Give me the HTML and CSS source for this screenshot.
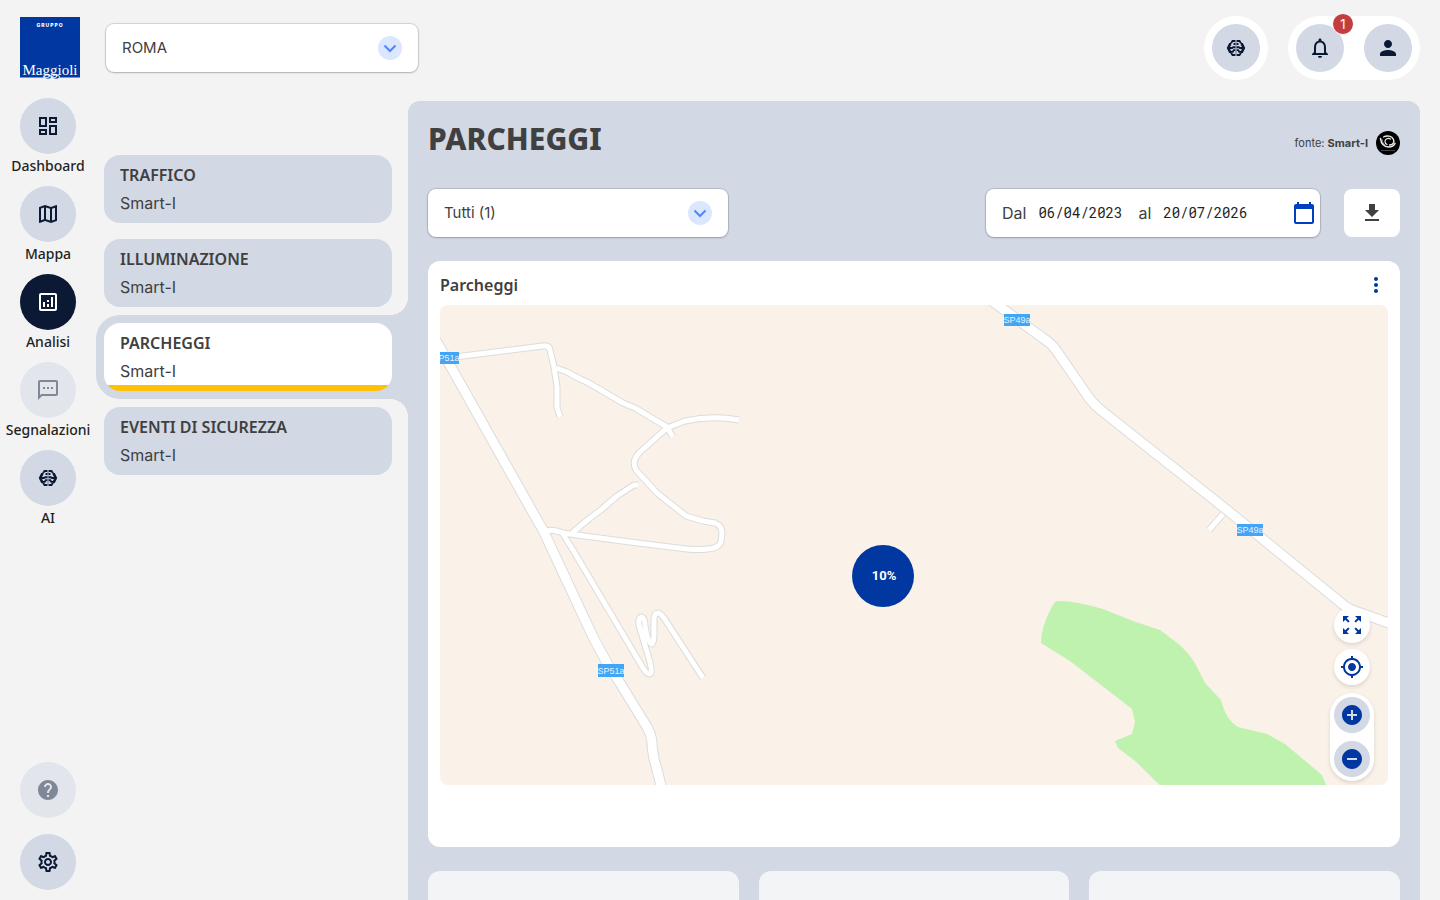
FILE: index.html
```html
<!DOCTYPE html>
<html lang="it">
<head>
<meta charset="utf-8">
<meta name="viewport" content="width=device-width, initial-scale=1">
<title>Parcheggi</title>
<link rel="stylesheet" href="styles.css">
</head>
<body>
<svg class="sprite" aria-hidden="true">
  <symbol id="i-brain" viewBox="0 0 24 24">
    <g fill="none" stroke="currentColor">
      <path stroke-width="1.800" d="M11.300 5H8.500L7 7.300M11.300 19H8.500L7 16.700M12.700 5h2.800L17 7.300M12.700 19h2.800l1.500-2.300"/>
      <path stroke-width="2.600" d="M7.200 8.200H6L4.200 12 6 15.800h1.200M16.800 8.200H18l1.800 3.800-1.800 3.800h-1.200"/>
      <path stroke-width="2" d="M4 12h4l1.200-.8h2.200M20 12h-4l-1.200-.8h-2.200M11.400 8H9.500M12.600 8h1.900"/>
      <path stroke-width="1.800" d="M7 15.800h1.800l1-1.600h1.500M17 15.800h-1.800l-1-1.600h-1.500"/>
      <path stroke-width="1" opacity=".5" d="M12 4v16"/>
    </g>
  </symbol>
  <symbol id="i-chevron" viewBox="0 0 24 24"><path d="M6.500 9.500 12 15l5.500-5.500" fill="none" stroke="currentColor" stroke-width="2"/></symbol>
</svg>

<aside class="rail">
  <a class="logo" href="#" aria-label="Gruppo Maggioli">
    <svg width="60" height="63" viewBox="0 0 60 63">
      <path fill="#0037a0" d="M0 0h60v60.500H0z"/>
      <text class="logo-top" x="30" y="10" text-anchor="middle">GRUPPO</text>
      <g fill="#0037a0" stroke="#fff" stroke-width="1"><ellipse cx="28" cy="60" rx="3.500" ry="2.200"/><ellipse cx="36" cy="60" rx="3.500" ry="2.200"/></g>
      <text class="logo-name" x="30" y="58" text-anchor="middle">Maggioli</text>
    </svg>
  </a>
  <nav class="rail-nav">
    <a class="rail-item" href="#"><span class="disc"><svg class="icon" viewBox="0 0 24 24"><path fill="currentColor" d="M19 5v2h-4V5h4M9 5v6H5V5h4m10 8v6h-4v-6h4M9 17v2H5v-2h4M21 3h-8v6h8V3zM11 3H3v10h8V3zm10 8h-8v10h8V11zm-10 4H3v6h8v-6z"/></svg></span>Dashboard</a>
    <a class="rail-item" href="#"><span class="disc"><svg class="icon" viewBox="0 0 24 24"><path fill="currentColor" d="M20.500 3l-.16.030L15 5.100 9 3 3.360 4.900c-.21.070-.36.250-.36.480V20.500c0 .28.220.5.5.5l.16-.030L9 18.900l6 2.100 5.640-1.900c.21-.070.36-.25.36-.48V3.500c0-.28-.22-.5-.5-.5zM10 5.470l4 1.400v11.660l-4-1.400V5.470zm-5 .99l3-1.010v11.700l-3 1.160V6.460zm14 11.080l-3 1.010V6.860l3-1.160v11.840z"/></svg></span>Mappa</a>
    <a class="rail-item" href="#" aria-current="page"><span class="disc disc-active"><svg class="icon" viewBox="0 0 24 24"><path fill="currentColor" d="M19 3H5c-1.100 0-2 .9-2 2v14c0 1.100.9 2 2 2h14c1.100 0 2-.9 2-2V5c0-1.100-.9-2-2-2zm0 16H5V5h14v14zM7 12h2v5H7zM15 7h2v10h-2zM11 14h2v3h-2zM11 10h2v2h-2z"/></svg></span>Analisi</a>
    <a class="rail-item" href="#"><span class="disc disc-off"><svg class="icon" viewBox="0 0 24 24"><path fill="currentColor" d="M20 2H4c-1.100 0-2 .9-2 2v18l4-4h14c1.100 0 2-.9 2-2V4c0-1.100-.9-2-2-2zm0 14H5.200L4 17.200V4h16v12zM7 9h2v2H7zM11 9h2v2h-2zM15 9h2v2h-2z"/></svg></span>Segnalazioni</a>
    <a class="rail-item" href="#"><span class="disc"><svg class="icon"><use href="#i-brain"/></svg></span>AI</a>
  </nav>
  <div class="rail-foot">
    <button class="disc disc-off" type="button" aria-label="Aiuto" disabled><svg class="icon" viewBox="0 0 24 24"><path fill="currentColor" d="M12 2C6.480 2 2 6.480 2 12s4.480 10 10 10 10-4.480 10-10S17.520 2 12 2zm1 17h-2v-2h2v2zm2.070-7.750l-.9.920C13.450 12.900 13 13.500 13 15h-2v-.5c0-1.100.45-2.100 1.170-2.830l1.240-1.260c.37-.36.590-.86.590-1.410 0-1.100-.9-2-2-2s-2 .9-2 2H8c0-2.210 1.790-4 4-4s4 1.790 4 4c0 .88-.36 1.680-.93 2.250z"/></svg></button>
    <button class="disc" type="button" aria-label="Impostazioni"><svg class="icon" viewBox="0 0 24 24"><path fill="currentColor" d="M19.430 12.980c.04-.32.070-.64.070-.98 0-.34-.03-.66-.07-.98l2.110-1.650c.19-.15.240-.42.120-.64l-2-3.460c-.09-.16-.26-.25-.44-.25-.06 0-.12.010-.17.030l-2.490 1c-.52-.4-1.080-.73-1.690-.98l-.38-2.650C14.460 2.180 14.250 2 14 2h-4c-.25 0-.46.180-.49.420l-.38 2.650c-.61.250-1.170.59-1.690.98l-2.490-1c-.06-.02-.12-.03-.18-.03-.17 0-.34.090-.43.250l-2 3.460c-.13.220-.07.490.12.640l2.110 1.650c-.04.320-.07.650-.07.980 0 .33.030.66.070.98l-2.110 1.650c-.19.150-.24.420-.12.640l2 3.460c.09.160.26.250.44.250.06 0 .12-.01.170-.03l2.490-1c.52.4 1.080.73 1.690.98l.38 2.650c.03.240.24.420.49.420h4c.25 0 .46-.18.490-.42l.38-2.650c.61-.25 1.170-.59 1.690-.98l2.490 1c.06.020.12.030.18.030.17 0 .34-.09.430-.25l2-3.460c.12-.22.070-.49-.12-.64l-2.110-1.650zm-1.980-1.710c.04.310.050.52.050.73 0 .21-.02.430-.05.730l-.14 1.130.89.700 1.080.84-.7 1.210-1.270-.51-1.040-.42-.9.680c-.43.320-.84.560-1.250.73l-1.060.43-.16 1.130-.2 1.350h-1.400l-.19-1.350-.16-1.130-1.060-.43c-.43-.18-.83-.41-1.230-.71l-.91-.7-1.060.43-1.270.51-.7-1.210 1.080-.84.890-.7-.14-1.130c-.03-.31-.05-.54-.05-.74s.020-.43.050-.73l.14-1.130-.89-.7-1.080-.84.7-1.210 1.270.51 1.040.42.900-.68c.43-.32.840-.56 1.250-.73l1.060-.43.160-1.130.2-1.350h1.390l.19 1.350.16 1.130 1.060.43c.43.180.83.410 1.230.71l.91.700 1.060-.43 1.270-.51.700 1.210-1.070.85-.89.700.14 1.130zM12 8c-2.210 0-4 1.790-4 4s1.790 4 4 4 4-1.790 4-4-1.790-4-4-4zm0 6c-1.100 0-2-.9-2-2s.9-2 2-2 2 .9 2 2-.9 2-2 2z"/></svg></button>
  </div>
</aside>

<div class="shell">
  <header class="topbar">
    <div class="picker picker-city">
      <select aria-label="Comune"><option>ROMA</option></select>
      <span class="picker-arrow"><svg class="icon"><use href="#i-chevron"/></svg></span>
    </div>
    <div class="top-actions">
      <div class="pill"><button class="disc disc-small" type="button" aria-label="AI"><svg class="icon"><use href="#i-brain"/></svg></button></div>
      <div class="pill">
        <button class="disc disc-small" type="button" aria-label="Notifiche"><svg class="icon" viewBox="0 0 24 24"><path fill="currentColor" d="M12 22c1.100 0 2-.9 2-2h-4c0 1.100.9 2 2 2zm6-6v-5c0-3.070-1.630-5.640-4.500-6.320V4c0-.83-.67-1.500-1.500-1.500s-1.500.67-1.500 1.500v.68C7.640 5.360 6 7.920 6 11v5l-2 2v1h16v-1l-2-2zm-2 1H8v-6c0-2.480 1.510-4.500 4-4.500s4 2.020 4 4.500v6z"/></svg><span class="badge">1</span></button>
        <button class="disc disc-small" type="button" aria-label="Profilo"><svg class="icon" viewBox="0 0 24 24"><path fill="currentColor" d="M12 12c2.210 0 4-1.790 4-4s-1.790-4-4-4-4 1.790-4 4 1.790 4 4 4zm0 2c-2.670 0-8 1.340-8 4v2h16v-2c0-2.660-5.330-4-8-4z"/></svg></button>
      </div>
    </div>
  </header>

  <div class="body">
    <nav class="topics">
      <div class="topic"><a class="topic-link" href="#"><strong>TRAFFICO</strong><span>Smart-I</span></a></div>
      <div class="topic"><a class="topic-link" href="#"><strong>ILLUMINAZIONE</strong><span>Smart-I</span></a></div>
      <div class="topic topic-active"><a class="topic-link" href="#" aria-current="page"><strong>PARCHEGGI</strong><span>Smart-I</span></a></div>
      <div class="topic"><a class="topic-link" href="#"><strong>EVENTI DI SICUREZZA</strong><span>Smart-I</span></a></div>
    </nav>

    <main class="panel">
      <div class="panel-head">
        <h1>PARCHEGGI</h1>
        <div class="source"><span>fonte: <b>Smart-I</b></span>
          <svg width="24" height="24" viewBox="0 0 24 24"><circle cx="12" cy="12" r="12" fill="#000"/><g fill="none" stroke="#eee" stroke-linecap="round"><path stroke-width="1.600" d="M4.500 7.500c.8 5.500 3.500 8.500 8 8.500 3 0 5.500-1.500 6.500-3.500"/><path stroke-width="1.400" d="M7.500 6c3.500-2 8.500-1 10 2.500 1.200 3-.8 5.500-4 5.500"/><path stroke-width="1.200" d="M14.500 8c-2.500-1.300-5.500 0-5.500 2.500 0 1.500.8 2.500 2 3"/><path stroke="#999" stroke-width="1" d="M6 8.500c.5 3 1.500 4.500 3 5.500"/></g><path stroke="#444" d="M5 19.500h14"/></svg>
        </div>
      </div>

      <div class="filters">
        <div class="picker picker-area">
          <select aria-label="Parcheggio"><option>Tutti (1)</option></select>
          <span class="picker-arrow"><svg class="icon"><use href="#i-chevron"/></svg></span>
        </div>
        <div class="range">
          <label for="from">Dal</label><input id="from" type="text" value="06/04/2023">
          <label for="to">al</label><input id="to" type="text" value="20/07/2026">
          <button class="range-open" type="button" aria-label="Apri calendario"><svg class="icon" viewBox="0 0 24 24"><path fill="currentColor" d="M20 3h-1V1h-2v2H7V1H5v2H4c-1.100 0-2 .9-2 2v16c0 1.100.9 2 2 2h16c1.100 0 2-.9 2-2V5c0-1.100-.9-2-2-2zm0 18H4V8h16v13z"/></svg></button>
        </div>
        <button class="download" type="button" aria-label="Scarica"><svg class="icon" viewBox="0 0 24 24"><path fill="currentColor" d="M19 9h-4V3H9v6H5l7 7 7-7zM5 18v2h14v-2H5z"/></svg></button>
      </div>

      <section class="card">
        <div class="card-head">
          <h2>Parcheggi</h2>
          <button class="more" type="button" aria-label="Altro"><svg class="icon" viewBox="0 0 24 24"><path fill="currentColor" d="M12 8c1.100 0 2-.9 2-2s-.9-2-2-2-2 .9-2 2 .9 2 2 2zm0 2c-1.100 0-2 .9-2 2s.9 2 2 2 2-.9 2-2-.9-2-2-2zm0 6c-1.100 0-2 .9-2 2s.9 2 2 2 2-.9 2-2-.9-2-2-2z"/></svg></button>
        </div>
        <div class="map">
          <svg class="map-art" viewBox="440 305 948 480" preserveAspectRatio="xMidYMid slice" role="img" aria-label="Mappa dei parcheggi">
            <defs>
              <g id="minor">
                <path d="M455 357 543 346Q549 345 550 350L554 367 557 387V407L560 417"/>
                <path d="M556 368 567 372 580 379 587 382 623 403 635 408 667 427 673 437"/>
                <path d="M739 420Q713 415 685 421L667 428 640 452Q631 461 636 470L657 493 686 516 703 521 715 523Q722 526 722 533L721 542Q719 548 708 549 698 550 687 549L630 542 577 535 563 533Q552 529 547 531"/>
                <path d="M638 485H634L617 496 602 509 590 518 572 533"/>
                <path d="M563 534 573 550 643 668Q648 676 651 673 653 671 647 652L639 625Q638 617 642 617 645 618 645 626 648 644 652 644 654 641 654 635V620Q654 613 658 613 660 613 664 618L703 678"/>
                <path d="M1223 514 1209 530"/>
              </g>
              <g id="major">
                <path d="M434 337 451 367 536 518 543 530 593 637 607 663 620 683 647 727Q652 736 652 744 653 757 656 766L663 793"/>
                <path d="M985 296 1043 338Q1051 343 1056 350L1087 395Q1092 403 1102 411L1227 510 1340 602Q1346 608 1355 611L1400 627"/>
              </g>
            </defs>
            <path fill="#faf1e8" d="M0 0h2400v1400H0z"/>
            <path fill="#bff2ae" d="M1058 601Q1072 600 1103 609L1133 621 1160 630 1180 645Q1193 658 1197 667L1205 683 1221 700Q1226 720 1238 727L1267 734 1285 744 1322 775 1328 790H1165L1135 761 1118 748 1115 741 1132 734 1135 722 1132 709 1070 661 1041 643Q1041 626 1053 605 1055 601 1058 601z"/>
            <use href="#minor" class="edge-minor"/><use href="#major" class="edge-major"/>
            <use href="#minor" class="fill-minor"/><use href="#major" class="fill-major"/>
            <g class="shield">
              <path d="M433 352h26v12h-26zM1004 314h26v12h-26zM1237 524h26v12h-26zM598 664h26v13h-26z"/>
              <text x="446" y="361">SP51a</text><text x="1017" y="323">SP49a</text><text x="1250" y="533">SP49a</text><text x="611" y="674">SP51a</text>
            </g>
            <circle cx="883" cy="576" r="31" fill="#0037a0"/>
            <text class="marker" x="884" y="580">10%</text>
          </svg>
          <div class="map-tools">
            <button class="tool" type="button" aria-label="Schermo intero"><svg class="icon" viewBox="0 0 24 24"><path fill="currentColor" d="M15 3l2.300 2.300-2.890 2.870 1.420 1.420L18.700 6.700 21 9V3zM3 9l2.300-2.300 2.870 2.890 1.420-1.420L6.700 5.300 9 3H3zm6 12l-2.300-2.300 2.890-2.870-1.420-1.420L5.300 17.300 3 15v6zm12-6l-2.300 2.300-2.870-2.890-1.420 1.420 2.890 2.870L15 21h6z"/></svg></button>
            <button class="tool" type="button" aria-label="Centra"><svg class="icon" viewBox="0 0 24 24"><path fill="currentColor" d="M12 8c-2.210 0-4 1.790-4 4s1.790 4 4 4 4-1.790 4-4-1.790-4-4-4zm8.940 3c-.46-4.170-3.770-7.480-7.940-7.940V1h-2v2.060C6.830 3.520 3.520 6.830 3.060 11H1v2h2.060c.46 4.170 3.770 7.480 7.940 7.940V23h2v-2.060c4.170-.46 7.480-3.770 7.940-7.940H23v-2h-2.060zM12 19c-3.870 0-7-3.130-7-7s3.130-7 7-7 7 3.130 7 7-3.130 7-7 7z"/></svg></button>
            <div class="zoom">
              <button class="tool tool-zoom" type="button" aria-label="Ingrandisci"><svg class="icon" viewBox="0 0 24 24"><path fill="currentColor" d="M12 2C6.480 2 2 6.480 2 12s4.480 10 10 10 10-4.480 10-10S17.520 2 12 2zm5 11h-4v4h-2v-4H7v-2h4V7h2v4h4v2z"/></svg></button>
              <button class="tool tool-zoom" type="button" aria-label="Riduci"><svg class="icon" viewBox="0 0 24 24"><path fill="currentColor" d="M12 2C6.480 2 2 6.480 2 12s4.480 10 10 10 10-4.480 10-10S17.520 2 12 2zm5 11H7v-2h10v2z"/></svg></button>
            </div>
          </div>
        </div>
      </section>

      <div class="tiles"><div class="tile"></div><div class="tile"></div><div class="tile"></div></div>
    </main>
  </div>
</div>
</body>
</html>
```

FILE: styles.css
```css
:root {
  --page: #f3f3f3;
  --mist: #d2d8e4;
  --blue: #0037a0;
  --navy: #0b1935;
  --ink: #404040;
  --text: Inter, "Liberation Sans", sans-serif;
  --display: "Noto Sans", sans-serif;
}

* { box-sizing: border-box; }

body {
  margin: 0;
  height: 100vh;
  display: flex;
  overflow: hidden;
  background: var(--page);
  color: var(--ink);
  font: 16px/24px var(--text);
}

a { color: inherit; text-decoration: none; }
h1, h2 { margin: 0; font-family: var(--display); }

button {
  border: 0;
  padding: 0;
  background: none;
  color: inherit;
  display: flex;
  align-items: center;
  justify-content: center;
}

.sprite { position: absolute; width: 0; height: 0; }
.icon { width: 24px; height: 24px; display: block; }

/* Left rail */
.rail {
  width: 96px;
  flex: none;
  display: flex;
  flex-direction: column;
  padding: 17px 0 10px;
}
.logo { height: 81px; padding-left: 20px; }
.logo svg { display: block; }
.logo-top { font: 800 5px var(--text); letter-spacing: 1px; fill: #fff; }
.logo-name { font: 15px "Liberation Serif", serif; fill: #fff; }

.rail-nav { display: flex; flex-direction: column; gap: 8px; }
.rail-item {
  display: flex;
  flex-direction: column;
  align-items: center;
  font: 500 14px/24px var(--display);
  color: #1f1f1f;
}
.rail-foot {
  margin-top: auto;
  display: flex;
  flex-direction: column;
  align-items: center;
  gap: 16px;
}

.disc {
  position: relative;
  width: 56px;
  height: 56px;
  border-radius: 50%;
  background: var(--mist);
  color: var(--navy);
  display: flex;
  align-items: center;
  justify-content: center;
}
.disc-small { width: 48px; height: 48px; }
.disc-active { background: var(--navy); color: #fff; }
.disc-off { background: #e2e5ec; color: #7f8897; }

/* Top bar */
.shell { flex: 1; min-width: 0; display: flex; flex-direction: column; }
.topbar {
  flex: none;
  display: flex;
  justify-content: space-between;
  align-items: center;
  padding: 16px 20px 21px 10px;
}
.top-actions { display: flex; gap: 20px; }
.pill {
  display: flex;
  gap: 20px;
  padding: 8px;
  border-radius: 32px;
  background: #fff;
}
.badge {
  position: absolute;
  top: -11px;
  right: -10px;
  width: 22px;
  height: 22px;
  border: 1px solid #fff;
  border-radius: 50%;
  background: #c23d3d;
  color: #fff;
  font: 13px/20px var(--text);
  text-align: center;
}

.picker {
  position: relative;
  height: 48px;
  border-radius: 8px;
  background: #fff;
  box-shadow: 0 0 1px 1px rgba(0, 0, 0, .14), 0 1px 2px rgba(0, 0, 0, .16);
}
.picker-city { width: 312px; }
.picker-area { width: 300px; margin-right: auto; }
.picker select {
  appearance: none;
  width: 100%;
  height: 100%;
  border: 0;
  padding: 0 48px 0 16px;
  background: none;
  color: var(--ink);
  font: 15px/24px var(--text);
}
.picker-arrow {
  position: absolute;
  top: 12px;
  right: 16px;
  border-radius: 50%;
  background: #dbe7ff;
  color: #4d86ff;
  pointer-events: none;
}

/* Topic list */
.body { flex: 1; min-height: 0; display: flex; }
.topics { width: 312px; flex: none; padding-top: 46px; }
.topic { position: relative; padding: 8px 16px 8px 8px; }
.topic-link {
  display: block;
  padding: 6px 16px;
  border-radius: 16px;
  background: var(--mist);
}
.topic-link strong, .topic-link span { display: block; line-height: 28px; }
.topic-link strong { font-family: var(--display); font-weight: 600; }
.topic-active { background: var(--mist); border-radius: 24px 0 0 24px; }
.topic-active .topic-link {
  background: linear-gradient(to top, #ffc107 6px, #fff 6px);
}
.topic-active::before, .topic-active::after {
  content: "";
  position: absolute;
  right: 0;
  width: 18px;
  height: 18px;
}
.topic-active::before {
  bottom: 100%;
  background: radial-gradient(circle at 0 0, transparent 18px, var(--mist) 18px);
}
.topic-active::after {
  top: 100%;
  background: radial-gradient(circle at 0 100%, transparent 18px, var(--mist) 18px);
}

/* Content panel */
.panel {
  flex: 1;
  min-width: 0;
  margin-right: 20px;
  padding: 20px;
  border-radius: 12px 12px 0 0;
  background: var(--mist);
  overflow-y: auto;
  scrollbar-width: none;
}
.panel-head {
  display: flex;
  justify-content: space-between;
  align-items: flex-start;
  height: 44px;
  margin-bottom: 24px;
}
.panel-head h1 { font-size: 30px; line-height: 36px; font-weight: 800; }
.source {
  align-self: center;
  display: flex;
  align-items: center;
  gap: 8px;
  font-size: 11px;
}

.filters { display: flex; gap: 24px; margin-bottom: 24px; }
.range {
  width: 334px;
  height: 48px;
  display: flex;
  align-items: center;
  padding: 0 4px 0 16px;
  border-radius: 8px;
  background: #fff;
  box-shadow: 0 0 1px 1px rgba(0, 0, 0, .14), 0 1px 2px rgba(0, 0, 0, .16);
  font-size: 16px;
}
.range input {
  width: 88px;
  margin: 0 12px;
  border: 0;
  padding: 0;
  background: none;
  color: #222;
  font: 14px/24px "Roboto Mono", "Liberation Mono", monospace;
}
.range-open { margin-left: auto; color: #0040c0; }
.download {
  width: 56px;
  height: 48px;
  border-radius: 8px;
  background: #fff;
}

.card {
  padding: 12px 12px 62px;
  border-radius: 12px;
  background: #fff;
}
.card-head {
  display: flex;
  justify-content: space-between;
  align-items: center;
  margin-bottom: 8px;
}
.card-head h2 { font-size: 16px; line-height: 24px; font-weight: 600; }
.more { color: var(--blue); }

.map {
  position: relative;
  height: 480px;
  border-radius: 8px;
  overflow: hidden;
}
.map-art { display: block; width: 100%; height: 100%; }
.edge-minor, .edge-major, .fill-minor, .fill-major {
  fill: none;
  stroke-linejoin: round;
}
.edge-minor { stroke: #dcdcdc; stroke-width: 7px; }
.edge-major { stroke: #dcdcdc; stroke-width: 11px; }
.fill-minor { stroke: #fff; stroke-width: 5px; }
.fill-major { stroke: #fff; stroke-width: 9px; }
.shield { fill: #42a5f5; }
.shield text { font: 9px "Liberation Sans", sans-serif; fill: #e3f3ff; text-anchor: middle; }
.marker { font: 700 13px Roboto, sans-serif; fill: #fff; text-anchor: middle; }

.map-tools {
  position: absolute;
  right: 14px;
  bottom: 4px;
  display: flex;
  flex-direction: column;
  align-items: center;
  gap: 6px;
}
.tool {
  width: 36px;
  height: 36px;
  border-radius: 50%;
  background: #fff;
  color: var(--blue);
  box-shadow: 0 2px 4px rgba(0, 0, 0, .12);
}
.zoom {
  display: flex;
  flex-direction: column;
  gap: 8px;
  margin-top: 2px;
  padding: 4px;
  border-radius: 22px;
  background: #fff;
  box-shadow: 0 2px 4px rgba(0, 0, 0, .12);
}
.tool-zoom { background: var(--mist); box-shadow: none; }

.tiles {
  display: grid;
  grid-template-columns: repeat(3, 1fr);
  gap: 20px;
  margin-top: 24px;
}
.tile { height: 200px; border-radius: 12px; background: #f3f4f6; }
```
